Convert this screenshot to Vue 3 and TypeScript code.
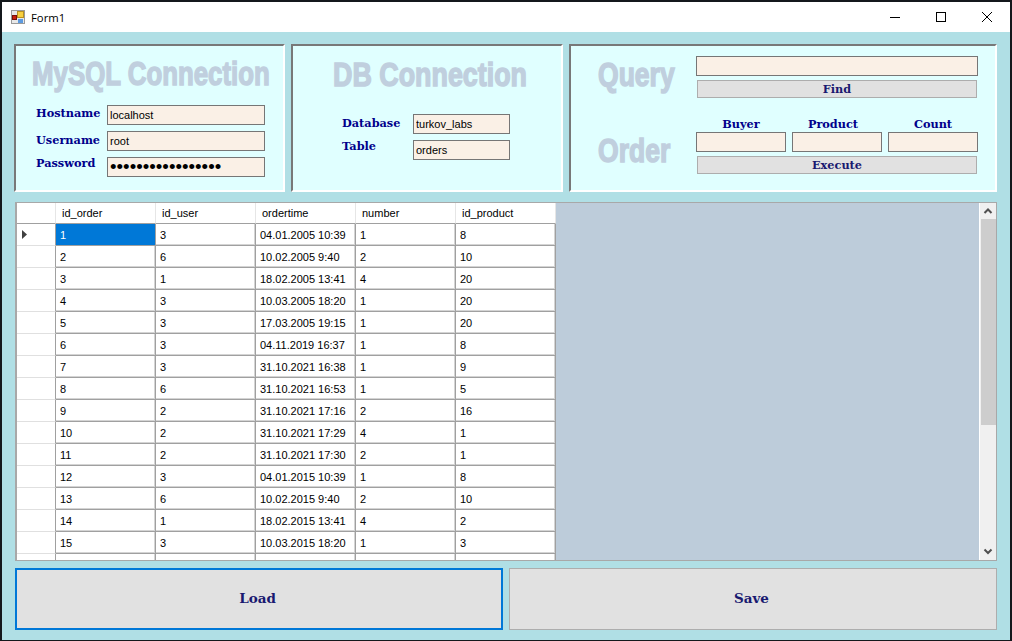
<template>
  <div class="window">
    <header class="titlebar">
      <svg class="app-icon" width="14" height="14" viewBox="0 0 14 14">
        <rect x="0.5" y="0.5" width="13" height="13" fill="#e8e8e8" stroke="#9a9a9a" />
        <rect x="1.5" y="5.5" width="4" height="4" fill="#c8200f" stroke="#7a1008" />
        <rect x="6.5" y="1.5" width="6" height="6" fill="#f8d040" stroke="#b89020" />
        <rect x="7" y="9" width="5" height="4" fill="#5c9ae0" />
      </svg>
      <span class="title-text">Form1</span>
      <div class="caption">
        <svg width="12" height="12" viewBox="0 0 12 12"><path d="M1 6.5h10" stroke="#000" fill="none" /></svg>
        <svg width="12" height="12" viewBox="0 0 12 12"><rect x="1.5" y="1.5" width="9" height="9" stroke="#000" fill="none" /></svg>
        <svg width="12" height="12" viewBox="0 0 12 12"><path d="M1 1l10 10M11 1L1 11" stroke="#000" fill="none" /></svg>
      </div>
    </header>

    <main class="form">
      <section class="panels">
        <div class="panel panel-mysql">
          <h2 class="big-title mysql-title">MySQL Connection</h2>
          <div class="fields">
            <label class="label label-host">Hostname</label>
            <input class="field" readonly value="localhost" />
            <label class="label">Username</label>
            <input class="field" readonly value="root" />
            <label class="label label-up">Password</label>
            <input class="field field-pass" type="password" readonly value="12345678901234567" />
          </div>
        </div>

        <div class="panel panel-db">
          <h2 class="big-title db-title">DB Connection</h2>
          <div class="fields fields-db">
            <label class="label">Database</label>
            <input class="field" readonly value="turkov_labs" />
            <label class="label label-up">Table</label>
            <input class="field" readonly value="orders" />
          </div>
        </div>

        <div class="panel panel-query">
          <div class="titles">
            <h2 class="big-title side-title">Query</h2>
            <h2 class="big-title side-title">Order</h2>
          </div>
          <div class="query-body">
            <input class="field field-wide" readonly value="" />
            <button class="small-btn">Find</button>
            <div class="order-grid">
              <span class="label order-label">Buyer</span>
              <span class="label order-label label-product">Product</span>
              <span class="label order-label">Count</span>
              <input class="field" readonly value="" />
              <input class="field" readonly value="" />
              <input class="field" readonly value="" />
            </div>
            <button class="small-btn">Execute</button>
          </div>
        </div>
      </section>

      <section class="grid-view">
        <div class="table">
          <div class="row head">
            <div class="row-head"></div>
            <div v-for="c in columns" :key="c" class="cell">{{ c }}</div>
          </div>
          <div v-for="(r, i) in rows" :key="i" class="row">
            <div class="row-head">
              <svg v-if="i === 0" class="pointer" width="5" height="9" viewBox="0 0 5 9"><path d="M0 0l5 4.5L0 9z" fill="#404040" /></svg>
            </div>
            <div v-for="(v, j) in r" :key="j" class="cell" :class="{ selected: i === 0 && j === 0 }">{{ v }}</div>
          </div>
          <div class="row">
            <div class="row-head"></div>
            <div v-for="c in columns" :key="c" class="cell"></div>
          </div>
        </div>
        <div class="scrollbar">
          <svg width="16" height="16" viewBox="0 0 16 16"><path d="M4.5 10l3.5-3.5 3.5 3.5" stroke="#505050" stroke-width="2" fill="none" /></svg>
          <div class="track"><div class="thumb"></div></div>
          <svg width="16" height="17" viewBox="0 0 16 17"><path d="M4.5 6.5l3.5 3.5 3.5-3.5" stroke="#505050" stroke-width="2" fill="none" /></svg>
        </div>
      </section>

      <section class="actions">
        <button class="big-btn focused">Load</button>
        <button class="big-btn">Save</button>
      </section>
    </main>
  </div>
</template>

<script setup lang="ts">
const columns = ['id_order', 'id_user', 'ordertime', 'number', 'id_product']

const rows: string[][] = [
  ['1', '3', '04.01.2005 10:39', '1', '8'],
  ['2', '6', '10.02.2005 9:40', '2', '10'],
  ['3', '1', '18.02.2005 13:41', '4', '20'],
  ['4', '3', '10.03.2005 18:20', '1', '20'],
  ['5', '3', '17.03.2005 19:15', '1', '20'],
  ['6', '3', '04.11.2019 16:37', '1', '8'],
  ['7', '3', '31.10.2021 16:38', '1', '9'],
  ['8', '6', '31.10.2021 16:53', '1', '5'],
  ['9', '2', '31.10.2021 17:16', '2', '16'],
  ['10', '2', '31.10.2021 17:29', '4', '1'],
  ['11', '2', '31.10.2021 17:30', '2', '1'],
  ['12', '3', '04.01.2015 10:39', '1', '8'],
  ['13', '6', '10.02.2015 9:40', '2', '10'],
  ['14', '1', '18.02.2015 13:41', '4', '2'],
  ['15', '3', '10.03.2015 18:20', '1', '3']
]
</script>

<style>
html,
body {
  margin: 0;
  overflow: hidden;
  background: #14181c;
}
</style>

<style scoped>
.window {
  width: 1008px;
  height: 638px;
  margin: 2px 2px 1px;
  display: flex;
  flex-direction: column;
  background: #b0dfe5;
  font-family: 'Liberation Sans', sans-serif;
}

.titlebar {
  height: 30px;
  flex: none;
  background: #fff;
  display: flex;
  align-items: center;
  padding-left: 9px;
}

.app-icon {
  flex: none;
}

.title-text {
  margin-left: 6px;
  font-family: 'Open Sans', sans-serif;
  font-size: 11.3px;
  color: #000;
}

.caption {
  margin-left: auto;
  display: flex;
  gap: 34px;
  padding-right: 17px;
  padding-bottom: 1px;
}

.form {
  flex: 1;
  display: flex;
  flex-direction: column;
  padding: 12px 13px 9px 12px;
  min-height: 0;
}

.panels {
  display: grid;
  grid-template-columns: 271px 272px 428px;
  gap: 6px;
  height: 148px;
  flex: none;
}

.panel {
  box-sizing: border-box;
  background: #e0ffff;
  border-style: solid;
  border-width: 2px;
  border-color: #787878 #fff #fff #787878;
}

.big-title {
  margin: 0;
  font-family: 'Liberation Sans', sans-serif;
  font-weight: 700;
  color: #c0cfde;
  -webkit-text-stroke: 1.5px #c0cfde;
  font-size: 34px;
  line-height: 34px;
  white-space: nowrap;
  transform: scaleX(0.77);
  transform-origin: left center;
}

.mysql-title {
  margin: 10px 0 0 16px;
  transform: scaleX(0.76);
}

.db-title {
  margin: 11px 0 0 40px;
  transform: scaleX(0.79);
}

.side-title {
  transform: scaleX(0.78);
}

.fields {
  display: grid;
  grid-template-columns: 71px 158px;
  grid-auto-rows: 20px;
  row-gap: 6px;
  margin: 15px 0 0 20px;
  align-items: center;
}

.fields-db {
  grid-template-columns: 71px 97px;
  margin: 23px 0 0 49px;
}

.label {
  font-family: 'DejaVu Serif', serif;
  font-weight: 700;
  font-size: 11.3px;
  color: #00008b;
  white-space: nowrap;
  transform: translateY(-1px);
}

.label-host {
  transform: translateY(-2px);
}

.label-up {
  transform: translateY(-4px);
}

.field {
  box-sizing: border-box;
  width: 100%;
  height: 20px;
  padding: 0 2px;
  margin: 0;
  border: 1px solid #767676;
  outline: none;
  border-radius: 0;
  background: #faf0e6;
  color: #000;
  font-family: 'Liberation Sans', sans-serif;
  font-size: 11px;
}

.field-pass {
  font-size: 18.7px;
}

.panel-query {
  display: flex;
}

.titles {
  width: 125px;
  flex: none;
  padding: 11px 0 0 27px;
  box-sizing: border-box;
  display: flex;
  flex-direction: column;
  gap: 42px;
}

.query-body {
  width: 282px;
  padding-top: 10px;
  display: flex;
  flex-direction: column;
}

.small-btn {
  box-sizing: border-box;
  width: 280px;
  height: 18px;
  margin: 4px 0 0 1px;
  padding: 0;
  background: #e1e1e1;
  border: 1px solid #adadad;
  font-family: 'DejaVu Serif', serif;
  font-weight: 700;
  font-size: 11.3px;
  color: #191970;
}

.order-grid {
  display: grid;
  grid-template-columns: repeat(3, 90px);
  column-gap: 6px;
  grid-template-rows: 16px 20px;
  margin-top: 18px;
}

.order-label {
  text-align: center;
  line-height: 16px;
  transform: translateY(0);
}

.label-product {
  transform: translateX(-4px);
}

.grid-view {
  margin-top: 10px;
  margin-left: 1px;
  height: 359px;
  flex: none;
  box-sizing: border-box;
  border: 1px solid #a8a8a8;
  border-left-width: 2px;
  background: #bdccda;
  display: flex;
  justify-content: space-between;
  overflow: hidden;
}

.table {
  width: 539px;
  overflow: hidden;
  flex: none;
}

.row {
  display: grid;
  grid-template-columns: 39px repeat(5, 100px);
  height: 22px;
  background: #fff;
}

.row.head {
  height: 21px;
}

.row-head {
  position: relative;
  box-sizing: border-box;
  border-right: 1px solid #a0a0a0;
  border-bottom: 1px solid #e0e0e0;
  background: #fff;
}

.pointer {
  position: absolute;
  left: 5px;
  top: 6px;
}

.cell {
  box-sizing: border-box;
  padding: 4px 0 0 4px;
  border-right: 1px solid #a0a0a0;
  border-bottom: 1px solid #a0a0a0;
  box-shadow: inset -1px -1px 0 #d4d4d4;
  font-size: 11px;
  line-height: 15px;
  color: #000;
  white-space: nowrap;
}

.head .row-head {
  border-right-color: #e6e6e6;
  border-bottom-color: #a0a0a0;
}

.head .cell {
  padding: 3px 0 0 6px;
  border-right-color: #e6e6e6;
  box-shadow: none;
}

.cell.selected {
  background: #0078d7;
  color: #fff;
  box-shadow: none;
}

.scrollbar {
  width: 16px;
  flex: none;
  background: #f0f0f0;
  border-left: 1px solid #fff;
  display: flex;
  flex-direction: column;
}

.scrollbar svg {
  flex: none;
}

.track {
  flex: 1;
}

.thumb {
  height: 206px;
  margin: 0 0 0 1px;
  background: #cdcdcd;
}

.actions {
  margin-top: 7px;
  margin-left: 1px;
  display: grid;
  grid-template-columns: 488px 488px;
  gap: 6px;
  height: 62px;
  flex: none;
}

.big-btn {
  box-sizing: border-box;
  padding: 0 3px 2px 0;
  background: #e1e1e1;
  border: 1px solid #adadad;
  font-family: 'DejaVu Serif', serif;
  font-weight: 700;
  font-size: 13.5px;
  color: #191970;
}

.big-btn.focused {
  border: 2px solid #0078d7;
}
</style>
